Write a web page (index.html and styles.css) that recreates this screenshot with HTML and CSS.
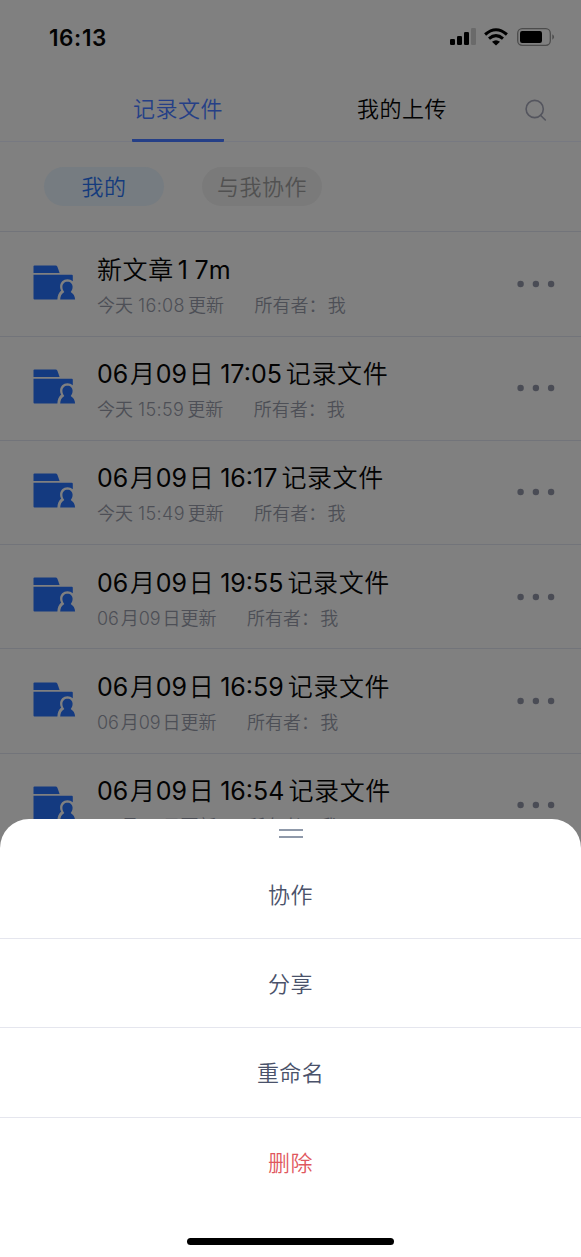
FILE: index.html
```html
<!DOCTYPE html>
<html lang="zh-CN">
<head>
<meta charset="utf-8">
<meta name="viewport" content="width=device-width, initial-scale=1">
<title>记录文件</title>
<link rel="stylesheet" href="styles.css">
</head>
<body>
<svg width="0" height="0" class="defs" aria-hidden="true">
  <symbol id="folder" viewBox="0 0 44 36">
    <path d="M1.5 .5H22.5Q23.8 .5 24.4 1.7L26.6 8H.5V1.5Q.5.5 1.5.5Z"/>
    <path d="M.5 9.8H38.8Q39.8 9.8 39.8 10.8V16.2C38.4 14.9 36.5 14.2 34.5 14.2C30.2 14.2 27.1 17.4 27.1 21.5C27.1 23.2 27.5 24.5 28.2 25.6C25.8 27.7 24.5 30.7 24.4 34.4H1.5Q.5 34.4.5 33.4Z"/>
    <path d="M27.2 34.4C27.3 31 28.6 28.6 31.3 26.9C30 25.6 29.4 23.8 29.4 21.8C29.4 18.8 31.5 16.7 34.5 16.7S39.6 18.8 39.6 21.8C39.6 23.8 39 25.6 37.7 26.9C40.4 28.6 42 31 42.1 34.4Z"/>
  </symbol>
  <symbol id="dots" viewBox="0 0 38 8"><circle cx="3.6" cy="4" r="3.2"/><circle cx="18.9" cy="4" r="3.2"/><circle cx="34.1" cy="4" r="3.2"/></symbol>
</svg>
<div class="screen">
  <header class="status">
    <span class="time">16:13</span>
    <div class="signals">
      <svg width="26" height="18" viewBox="0 0 26 18"><g><rect x="0" y="11" width="5" height="6" rx="1.3"/><rect x="7" y="8" width="5" height="9" rx="1.3"/><rect x="14" y="4" width="5" height="13" rx="1.3"/></g><rect x="21" y="0" width="5" height="17" rx="1.3" fill="#6a6a6a"/></svg>
      <svg class="wifi" width="24" height="18" viewBox="0 0 24 18"><g fill="none" stroke="#000" stroke-width="3"><path d="M1.1 6.5Q12-2.9 22.9 6.5"/><path d="M5 10.7Q12 4.6 19 10.7"/></g><path d="M8 13.8Q12 10.5 16 13.8L12 17.5Z"/></svg>
      <svg class="battery" width="38" height="18" viewBox="0 0 38 18"><rect x=".7" y=".7" width="32.6" height="16.6" rx="4.5" fill="none" stroke="#4c4c4c" stroke-width="1.3"/><rect x="3" y="3" width="22" height="12" rx="2.2"/><path d="M35.3 6.3Q39 9 35.3 11.7Z" fill="#4c4c4c"/></svg>
    </div>
  </header>
  <nav class="tabs">
    <span class="tab active">记录文件</span>
    <span class="tab uploads">我的上传</span>
    <svg class="search" width="22" height="23" viewBox="0 0 22 23"><g fill="none" stroke="#54555e" stroke-width="1.6" stroke-linecap="round"><circle cx="9.7" cy="10" r="8.6"/><path d="M15.5 16.2L20.3 21"/></g></svg>
  </nav>
  <div class="filters">
    <span class="pill mine">我的</span>
    <span class="pill shared">与我协作</span>
  </div>
  <main class="files">
    <article class="row"><svg class="folder"><use href="#folder"/></svg><div class="info"><div class="title">新文章<b class="one">1</b><b class="seven">7m</b></div><div class="meta"><span>今天 <b class="clock">16:08</b>更新</span><span>所有者：<b class="owner">我</b></span></div></div><svg class="more"><use href="#dots"/></svg></article>
    <article class="row"><svg class="folder"><use href="#folder"/></svg><div class="info"><div class="title"><b>06</b>月<b>09</b>日 <b class="clock">17:05</b>记录文件</div><div class="meta"><span>今天 <b class="clock">15:59</b>更新</span><span>所有者：<b class="owner">我</b></span></div></div><svg class="more"><use href="#dots"/></svg></article>
    <article class="row"><svg class="folder"><use href="#folder"/></svg><div class="info"><div class="title"><b>06</b>月<b>09</b>日 <b class="clock">16:17</b>记录文件</div><div class="meta"><span>今天 <b class="clock">15:49</b>更新</span><span>所有者：<b class="owner">我</b></span></div></div><svg class="more"><use href="#dots"/></svg></article>
    <article class="row"><svg class="folder"><use href="#folder"/></svg><div class="info"><div class="title"><b>06</b>月<b>09</b>日 <b class="clock">19:55</b>记录文件</div><div class="meta"><span><b>06</b>月<b>09</b>日更新</span><span>所有者：<b class="owner">我</b></span></div></div><svg class="more"><use href="#dots"/></svg></article>
    <article class="row"><svg class="folder"><use href="#folder"/></svg><div class="info"><div class="title"><b>06</b>月<b>09</b>日 <b class="clock">16:59</b>记录文件</div><div class="meta"><span><b>06</b>月<b>09</b>日更新</span><span>所有者：<b class="owner">我</b></span></div></div><svg class="more"><use href="#dots"/></svg></article>
    <article class="row"><svg class="folder"><use href="#folder"/></svg><div class="info"><div class="title"><b>06</b>月<b>09</b>日 <b class="clock">16:54</b>记录文件</div><div class="meta"><span><b>06</b>月<b>09</b>日更新</span><span>所有者：<b class="owner">我</b></span></div></div><svg class="more"><use href="#dots"/></svg></article>
  </main>
  <section class="sheet">
    <div class="grip"><i></i><i></i></div>
    <div class="action first">协作</div>
    <div class="action">分享</div>
    <div class="action">重命名</div>
    <div class="action delete">删除</div>
    <div class="home"></div>
  </section>
</div>
</body>
</html>
```
FILE: styles.css
```css
* { box-sizing: border-box; }
body { margin: 0; background: #808080; font-family: Inter, "Noto Sans CJK SC", sans-serif; font-weight: 350; color: #030303; }
.defs { position: absolute; }
.screen { position: relative; width: 581px; height: 1257px; overflow: hidden; background: #808080; }
.status { height: 74px; display: flex; justify-content: space-between; padding: 0 26px 0 49px; }
.time { font-size: 22.5px; font-weight: 600; line-height: 75px; letter-spacing: .6px; }
.signals { display: flex; align-items: flex-start; padding-top: 28px; }
.wifi { margin: 0 9px 0 8px; }
.tabs { height: 68px; display: flex; border-bottom: 1px solid #777981; padding-left: 132px; }
.tab { width: 92px; height: 68px; text-align: center; font-size: 22px; line-height: 70px; letter-spacing: .5px; white-space: nowrap; }
.active { color: #253f87; border-bottom: 3px solid #253f87; border-radius: 1px; }
.uploads { margin-left: 132px; }
.search { margin: 25px 0 0 77px; }
.filters { height: 90px; display: flex; gap: 38px; padding: 25px 0 0 44px; border-bottom: 1px solid #72747a; }
.pill { width: 120px; height: 39px; border-radius: 20px; text-align: center; font-size: 22px; line-height: 40px; letter-spacing: .5px; }
.mine { background: #767c81; color: #143b7d; }
.shared { background: #7a7a7a; color: #515151; }
.files { padding-top: .4px; }
.row { height: 104.25px; display: flex; border-bottom: 1px solid #72747a; padding-left: 33px; }
.folder { width: 44px; height: 36px; margin-top: 32.2px; fill: #143a80; flex: none; }
.info { margin-left: 20px; width: 420px; padding-top: 18.6px; }
.title { font-size: 25px; line-height: 38px; letter-spacing: .6px; white-space: nowrap; }
b { font-weight: inherit; margin-right: 1.8px; letter-spacing: 0; }
.title b { font-weight: 400; }
.title .one { margin: 0 6.5px 0 4px; }
.title .clock { margin-left: -1.8px; margin-right: 4px; }
.meta { display: flex; gap: 30.5px; font-size: 18px; line-height: 33px; color: #4d4f56; white-space: nowrap; }
.meta .clock { letter-spacing: .35px; margin-right: 3px; }
.owner { margin: 0 0 0 1.2px; }
.more { width: 38px; height: 8px; margin-top: 47.4px; fill: #4a4c55; flex: none; }
.sheet { position: absolute; left: 0; right: 0; top: 819px; height: 438px; border-radius: 29px 29px 0 0; background: #fff; }
.grip { height: 30.6px; padding-top: 10px; display: flex; flex-direction: column; align-items: center; gap: 5px; }
.grip i { width: 24px; height: 2px; background: #8f99aa; }
.action { height: 89.4px; border-bottom: 1px solid #e5e6ee; text-align: center; font-size: 22px; line-height: 91px; letter-spacing: .4px; color: #4a526a; }
.delete { border: 0; color: #df585e; }
.home { width: 207px; height: 7px; border-radius: 4px; background: #000; margin: 30.4px auto 0; }
```
